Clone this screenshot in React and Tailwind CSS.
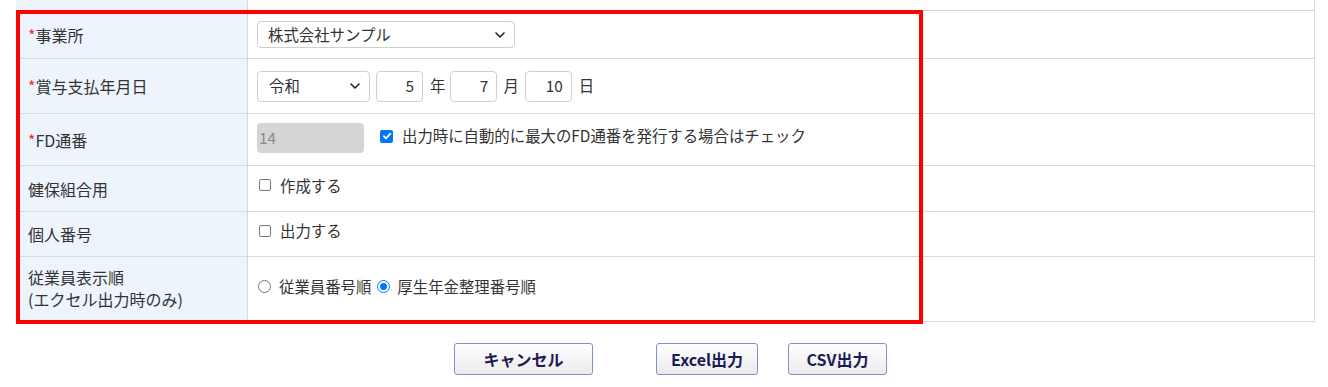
import React from "react";

const Chevron = () => (
  <svg width="10" height="6" viewBox="0 0 10 6" className="absolute right-[9px] top-1/2 -translate-y-1/2">
    <polyline points="1,1 5,5 9,1" fill="none" stroke="#222" strokeWidth="1.6" strokeLinecap="round" strokeLinejoin="round" />
  </svg>
);

const Req = () => <span className="text-[#e8303a]">*</span>;

const Row = ({ h, label, children }) => (
  <div className={`flex border-b border-[#d9d9d9] ${h}`}>
    <div className="w-[232px] shrink-0 bg-[#edf4fc] border-r border-[#d9d9d9] pl-3 flex items-center text-[16px] leading-[22px] text-[#333]">
      {label}
    </div>
    <div className="flex-1 flex items-center pl-[9px] text-[15.4px] text-[#333]">{children}</div>
  </div>
);

const NumBox = ({ v }) => (
  <div className="w-[47px] h-[31px] border border-[#cfcfcf] rounded-[4px] flex items-center justify-end pr-[8px] bg-white">{v}</div>
);

const Btn = ({ w, children }) => (
  <div className={`${w} h-[32px] border border-[#7f8fd0] rounded-[3px] bg-gradient-to-b from-white to-[#ebebeb] flex items-center justify-center font-bold text-[16px] text-[#1b1b55]`}>
    {children}
  </div>
);

export default function App() {
  return (
    <div
      className="relative w-[1328px] h-[387px] bg-white overflow-hidden"
      style={{ fontFamily: '"Noto Sans CJK JP", "Noto Sans", sans-serif' }}
    >
      <div className="ml-4 w-[1299px] border-r border-[#dcdcdc]">
        <div className="flex h-[11px] border-b border-[#d4d4d4]">
          <div className="w-[232px] bg-[#edf4fc] border-r border-[#d9d9d9]" />
          <div className="flex-1" />
        </div>
        <Row h="h-[48px]" label={<span><Req />事業所</span>}>
          <div className="relative w-[258px] h-[27px] border border-[#cfcfcf] rounded-[4px] flex items-center pl-[10px] bg-white">
            株式会社サンプル
            <Chevron />
          </div>
        </Row>
        <Row h="h-[55px]" label={<span><Req />賞与支払年月日</span>}>
          <div className="flex items-center">
            <div className="relative w-[113px] h-[31px] border border-[#cfcfcf] rounded-[4px] flex items-center pl-[11px] bg-white">
              令和
              <Chevron />
            </div>
            <div className="ml-[6px]"><NumBox v="5" /></div>
            <span className="ml-[7px]">年</span>
            <div className="ml-[5px]"><NumBox v="7" /></div>
            <span className="ml-[6px]">月</span>
            <div className="ml-[6px]"><NumBox v="10" /></div>
            <span className="ml-[7px]">日</span>
          </div>
        </Row>
        <Row h="h-[52px]" label={<span><Req />FD通番</span>}>
          <div className="flex items-center -mt-[3px]">
            <div className="w-[107px] h-[30px] rounded-[4px] bg-[#d5d5d5] flex items-center pl-[2px] text-[#8a8a8a]">14</div>
            <div className="ml-[16px] -mt-[4px] w-[13px] h-[13px] rounded-[2px] bg-[#0075ff] flex items-center justify-center">
              <svg width="10" height="10" viewBox="0 0 10 10">
                <polyline points="1.8,5.2 4,7.4 8.4,2.6" fill="none" stroke="#fff" strokeWidth="1.8" strokeLinecap="round" strokeLinejoin="round" />
              </svg>
            </div>
            <span className="ml-[9px] -mt-[4px]">出力時に自動的に最大のFD通番を発行する場合はチェック</span>
          </div>
        </Row>
        <Row h="h-[46px]" label="健保組合用">
          <div className="flex items-center -mt-[6px]">
            <div className="ml-[2px] w-[12px] h-[12px] rounded-[2px] border border-[#767676] bg-white" />
            <span className="ml-[9px]">作成する</span>
          </div>
        </Row>
        <Row h="h-[45px]" label="個人番号">
          <div className="flex items-center -mt-[6px]">
            <div className="ml-[2px] w-[12px] h-[12px] rounded-[2px] border border-[#767676] bg-white" />
            <span className="ml-[9px]">出力する</span>
          </div>
        </Row>
        <Row
          h="h-[65px]"
          label={
            <div className="-mt-[3px]">
              <div>従業員表示順</div>
              <div>(エクセル出力時のみ)</div>
            </div>
          }
        >
          <div className="flex items-center -mt-[5px]">
            <div className="ml-[1px] w-[13px] h-[13px] rounded-full border border-[#767676] bg-white" />
            <span className="ml-[8px]">従業員番号順</span>
            <div className="ml-[6px] w-[13px] h-[13px] rounded-full border border-[#0075ff] bg-white flex items-center justify-center">
              <div className="w-[7px] h-[7px] rounded-full bg-[#0075ff]" />
            </div>
            <span className="ml-[7px]">厚生年金整理番号順</span>
          </div>
        </Row>
      </div>

      <div className="flex pl-[454px] mt-[21px]">
        <Btn w="w-[139px]">キャンセル</Btn>
        <div className="ml-[63px]"><Btn w="w-[102px]">Excel出力</Btn></div>
        <div className="ml-[30px]"><Btn w="w-[99px]">CSV出力</Btn></div>
      </div>

      <div className="absolute left-[16px] top-[10px] w-[907px] h-[314px] border-4 border-[#ff0000] pointer-events-none" />
    </div>
  );
}
